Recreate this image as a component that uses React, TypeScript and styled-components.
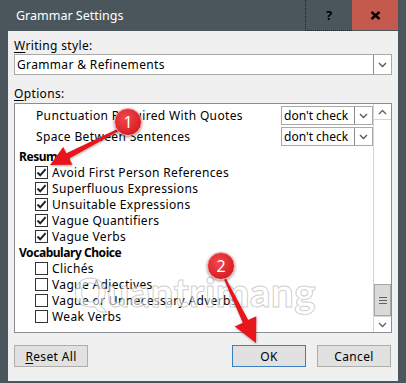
import React from "react";
import styled, { createGlobalStyle } from "styled-components";

const GlobalStyle = createGlobalStyle`
  html, body {
    margin: 0;
    padding: 0;
    background: #4b565c;
  }
  body {
    font-family: "Noto Sans", "Segoe UI", sans-serif;
    font-size: 12px;
    color: #000;
  }
`;

const Window = styled.div`
  position: relative;
  width: 406px;
  height: 383px;
  box-sizing: border-box;
  background: #4b565c;
  padding: 0 8px 2px 8px;
  display: flex;
  flex-direction: column;
  overflow: hidden;
`;

const TitleBar = styled.div`
  height: 31px;
  display: flex;
  align-items: stretch;
  flex-shrink: 0;
`;

const Title = styled.div`
  flex: 1;
  color: #fff;
  font-size: 12.5px;
  padding-left: 8px;
  display: flex;
  align-items: center;
`;

const HelpButton = styled.div`
  width: 46px;
  height: 30px;
  border-left: 1px dotted #1d2326;
  border-bottom: 1px dotted #1d2326;
  display: flex;
  align-items: center;
  justify-content: center;
  font-weight: 700;
  font-size: 13px;
  color: #000;
`;

const CloseButton = styled.div`
  width: 46px;
  height: 30px;
  background: #c45a4d;
  display: flex;
  align-items: center;
  justify-content: center;
`;

const Body = styled.div`
  flex: 1;
  background: #f0f0f0;
  padding: 7px 6px 0 6px;
  display: flex;
  flex-direction: column;
  letter-spacing: 0.35px;
`;

const Label = styled.div<{ $gap?: number }>`
  line-height: 15px;
  margin-top: ${(p) => p.$gap ?? 0}px;
  u {
    text-decoration-thickness: 1px;
    text-underline-offset: 2px;
  }
`;

const Select = styled.div`
  margin-top: 1px;
  height: 21px;
  box-sizing: border-box;
  border: 1px solid #a9a9a9;
  background: #fff;
  display: flex;
  align-items: stretch;
`;

const SelectText = styled.div`
  flex: 1;
  padding-left: 2px;
  display: flex;
  align-items: center;
`;

const SelectArrow = styled.div`
  width: 17px;
  border-left: 1px solid #8a8a8a;
  display: flex;
  align-items: center;
  justify-content: center;
`;

const ListBox = styled.div`
  margin-top: 2px;
  height: 230px;
  box-sizing: border-box;
  border: 1px solid #8a8d93;
  background: #fff;
  display: flex;
`;

const ListContent = styled.div`
  flex: 1;
  padding-top: 1px;
  display: flex;
  flex-direction: column;
`;

const OptionRow = styled.div`
  height: 21px;
  padding-left: 21px;
  display: flex;
  align-items: center;
  justify-content: space-between;
`;

const SmallSelect = styled.div`
  width: 92px;
  height: 19px;
  box-sizing: border-box;
  border: 1px solid #a9a9a9;
  display: flex;
  align-items: stretch;
  letter-spacing: 0;
`;

const GroupHeader = styled.div<{ $first?: boolean }>`
  height: 16px;
  margin-top: ${(p) => (p.$first ? 1 : 0)}px;
  padding-left: 4px;
  font-weight: 700;
  letter-spacing: -0.45px;
  display: flex;
  align-items: center;
`;

const CheckRow = styled.div`
  height: 16px;
  padding-left: 20px;
  display: flex;
  align-items: center;
  gap: 4px;
`;

const Box = styled.div`
  width: 13px;
  height: 13px;
  box-sizing: border-box;
  border: 1px solid #333;
  background: #fff;
  display: flex;
  align-items: center;
  justify-content: center;
`;

const ScrollBar = styled.div`
  width: 17px;
  border-left: 1px solid #d4d4d4;
  display: flex;
  flex-direction: column;
`;

const ScrollArrow = styled.div<{ $down?: boolean }>`
  height: 16px;
  box-sizing: border-box;
  display: flex;
  align-items: center;
  justify-content: center;
  ${(p) => (p.$down ? "border-top: 1px solid #d4d4d4;" : "border-bottom: 1px solid #d4d4d4;")}
`;

const Track = styled.div`
  flex: 1;
  display: flex;
  flex-direction: column;
  justify-content: flex-end;
`;

const Thumb = styled.div`
  height: 32px;
  box-sizing: border-box;
  border: 1px solid #a6a6a6;
  background: #dadada;
  display: flex;
  align-items: center;
  justify-content: center;
`;

const Footer = styled.div`
  margin-top: 12px;
  padding-right: 1px;
  display: flex;
  gap: 11px;
`;

const Button = styled.div<{ $default?: boolean; $push?: boolean }>`
  width: 74px;
  height: 22px;
  box-sizing: border-box;
  background: #e1e1e1;
  border: 1px solid ${(p) => (p.$default ? "#3a7fc0" : "#adadad")};
  margin-left: ${(p) => (p.$push ? "auto" : "0")};
  display: flex;
  align-items: center;
  justify-content: center;
  u {
    text-underline-offset: 2px;
  }
`;

const Badge = styled.div<{ $x: number; $y: number }>`
  position: absolute;
  left: ${(p) => p.$x - 14}px;
  top: ${(p) => p.$y - 14}px;
  width: 28px;
  height: 28px;
  border-radius: 50%;
  box-sizing: border-box;
  border: 1.5px solid #f4a0a0;
  background: radial-gradient(circle at 40% 35%, #f2484c, #d91f26 70%, #b8151b);
  box-shadow: 0 1px 3px rgba(0, 0, 0, 0.45);
  color: #fff;
  font-size: 16px;
  display: flex;
  align-items: center;
  justify-content: center;
`;

const Arrows = styled.svg`
  position: absolute;
  left: 0;
  top: 0;
  pointer-events: none;
`;

const Watermark = styled.div`
  position: absolute;
  left: 74px;
  top: 268px;
  font-family: "Lato", "Noto Sans", sans-serif;
  font-weight: 900;
  font-size: 40px;
  letter-spacing: 0.5px;
  color: rgba(255, 255, 255, 0.6);
  -webkit-text-stroke: 1px rgba(130, 130, 130, 0.4);
  pointer-events: none;
`;

const Chevron = ({ up, color = "#555" }: { up?: boolean; color?: string }) => (
  <svg width="9" height="6" viewBox="0 0 9 6">
    <path
      d={up ? "M1 5 L4.5 1.5 L8 5" : "M1 1 L4.5 4.5 L8 1"}
      fill="none"
      stroke={color}
      strokeWidth="1.3"
    />
  </svg>
);

const Check = () => (
  <svg width="11" height="11" viewBox="0 0 11 11">
    <path d="M1.5 5.5 L4.2 8.3 L9.6 2.2" fill="none" stroke="#222" strokeWidth="2" />
  </svg>
);

const CheckItem = ({ label, checked }: { label: string; checked?: boolean }) => (
  <CheckRow>
    <Box>{checked && <Check />}</Box>
    <span>{label}</span>
  </CheckRow>
);

function arrowPoints(sx: number, sy: number, tx: number, ty: number, headLen: number, headHalf: number) {
  const dx = tx - sx;
  const dy = ty - sy;
  const len = Math.hypot(dx, dy);
  const ux = dx / len;
  const uy = dy / len;
  const nx = -uy;
  const ny = ux;
  const bx = tx - ux * headLen;
  const by = ty - uy * headLen;
  const pts = [
    [sx + nx * 1, sy + ny * 1],
    [bx + nx * 3, by + ny * 3],
    [bx + nx * headHalf, by + ny * headHalf],
    [tx, ty],
    [bx - nx * headHalf, by - ny * headHalf],
    [bx - nx * 3, by - ny * 3],
    [sx - nx * 1, sy - ny * 1],
  ];
  return pts.map((p) => p.map((v) => v.toFixed(1)).join(",")).join(" ");
}

const resumes = [
  "Avoid First Person References",
  "Superfluous Expressions",
  "Unsuitable Expressions",
  "Vague Quantifiers",
  "Vague Verbs",
];

const vocabulary = ["Clichés", "Vague Adjectives", "Vague or Unnecessary Adverbs", "Weak Verbs"];

export default function App() {
  return (
    <>
      <GlobalStyle />
      <Window>
        <TitleBar>
          <Title>Grammar Settings</Title>
          <HelpButton>?</HelpButton>
          <CloseButton>
            <svg width="11" height="9" viewBox="0 0 11 9">
              <path d="M1.5 1 L9.5 8 M9.5 1 L1.5 8" stroke="#000" strokeWidth="2.4" />
            </svg>
          </CloseButton>
        </TitleBar>
        <Body>
          <Label>
            <u>W</u>riting style:
          </Label>
          <Select>
            <SelectText>Grammar &amp; Refinements</SelectText>
            <SelectArrow>
              <Chevron />
            </SelectArrow>
          </Select>
          <Label $gap={11}>
            <u>O</u>ptions:
          </Label>
          <ListBox>
            <ListContent>
              <OptionRow>
                <span>Punctuation Required With Quotes</span>
                <SmallSelect>
                  <SelectText>don't check</SelectText>
                  <SelectArrow>
                    <Chevron />
                  </SelectArrow>
                </SmallSelect>
              </OptionRow>
              <OptionRow>
                <span>Space Between Sentences</span>
                <SmallSelect>
                  <SelectText>don't check</SelectText>
                  <SelectArrow>
                    <Chevron />
                  </SelectArrow>
                </SmallSelect>
              </OptionRow>
              <GroupHeader $first>Resumes</GroupHeader>
              {resumes.map((r) => (
                <CheckItem key={r} label={r} checked />
              ))}
              <GroupHeader>Vocabulary Choice</GroupHeader>
              {vocabulary.map((v) => (
                <CheckItem key={v} label={v} />
              ))}
            </ListContent>
            <ScrollBar>
              <ScrollArrow>
                <Chevron up color="#606060" />
              </ScrollArrow>
              <Track>
                <Thumb>
                  <svg width="8" height="7" viewBox="0 0 8 7">
                    <path d="M0 0.5 H8 M0 3.5 H8 M0 6.5 H8" stroke="#606060" strokeWidth="1" />
                  </svg>
                </Thumb>
              </Track>
              <ScrollArrow $down>
                <Chevron color="#606060" />
              </ScrollArrow>
            </ScrollBar>
          </ListBox>
          <Footer>
            <Button>
              <span>
                <u>R</u>eset All
              </span>
            </Button>
            <Button $push $default>
              OK
            </Button>
            <Button>Cancel</Button>
          </Footer>
        </Body>

        <Watermark>Quantrimang</Watermark>

        <Arrows width="406" height="383" viewBox="0 0 406 383">
          <defs>
            <filter id="shadow" x="-20%" y="-20%" width="140%" height="140%">
              <feDropShadow dx="0.5" dy="1" stdDeviation="1" floodColor="#000" floodOpacity="0.35" />
            </filter>
          </defs>
          <polygon points={arrowPoints(120, 129, 50, 165, 20, 10)} fill="#e8161c" filter="url(#shadow)" />
          <polygon points={arrowPoints(225, 279, 256, 343, 24, 12)} fill="#e8161c" filter="url(#shadow)" />
        </Arrows>
        <Badge $x={128} $y={122}>1</Badge>
        <Badge $x={221} $y={266}>2</Badge>
      </Window>
    </>
  );
}
